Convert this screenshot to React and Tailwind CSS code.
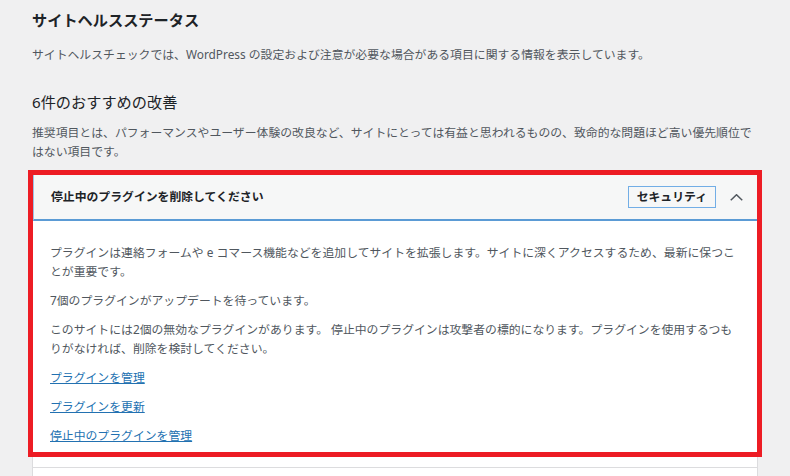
export default function App() {
  return (
    <div className="min-h-[476px] overflow-hidden bg-[#f0f0f1] font-['Noto_Sans','Noto_Sans_CJK_JP',sans-serif] text-[11.85px] text-[#50575e]">
      <div className="ml-[32px] w-[726px] pt-[9px]">
        <h2 className="text-[15.2px] font-bold leading-[22px] text-[#1d2327]">サイトヘルスステータス</h2>
        <p className="mt-[14px] leading-[19px]">
          サイトヘルスチェックでは、WordPress の設定および注意が必要な場合がある項目に関する情報を表示しています。
        </p>
        <h3 className="mt-[27px] text-[15.2px] font-normal leading-[22px] text-[#1d2327]">6件のおすすめの改善</h3>
        <p className="mt-[10px] leading-[19px]">
          推奨項目とは、パフォーマンスやユーザー体験の改良など、サイトにとっては有益と思われるものの、致命的な問題ほど高い優先順位ではない項目です。
        </p>

        <div className="mt-[14px] border-x border-[#dcdcde] bg-white">
          <div className="relative border-b border-[#dcdcde]">
            <div className="flex h-[46px] items-center border-l border-b-2 border-l-[#9cc3e6] border-b-[#5b9bd5] bg-[#f6f7f7] pl-[17px] pr-[14px]">
              <span className="flex-1 font-bold text-[#1d2327]">停止中のプラグインを削除してください</span>
              <span className="flex h-[22px] items-center border border-[#72aee6] px-[8px] font-bold text-[#1d2327]">
                セキュリティ
              </span>
              <svg className="ml-[14px]" width="13" height="7" viewBox="0 0 13 7" fill="none">
                <polyline points="0.75,6.25 6.5,0.75 12.25,6.25" stroke="#50575e" strokeWidth="1.5" />
              </svg>
            </div>
            <div className="flex flex-col gap-[10px] px-[17px] pt-[22px] pb-[22px] leading-[19px]">
              <p>プラグインは連絡フォームや e コマース機能などを追加してサイトを拡張します。サイトに深くアクセスするため、最新に保つことが重要です。</p>
              <p>7個のプラグインがアップデートを待っています。</p>
              <p>このサイトには2個の無効なプラグインがあります。 停止中のプラグインは攻撃者の標的になります。プラグインを使用するつもりがなければ、削除を検討してください。</p>
              <p><a href="#" className="text-[#2271b1] underline">プラグインを管理</a></p>
              <p><a href="#" className="text-[#2271b1] underline">プラグインを更新</a></p>
              <p><a href="#" className="text-[#2271b1] underline">停止中のプラグインを管理</a></p>
            </div>
            <div className="pointer-events-none absolute left-[-5px] right-[-5px] top-[-5px] h-[287px] border-[5px] border-[#ed1c24]"></div>
          </div>
          <div className="h-[60px] bg-white"></div>
        </div>
      </div>
    </div>
  );
}
